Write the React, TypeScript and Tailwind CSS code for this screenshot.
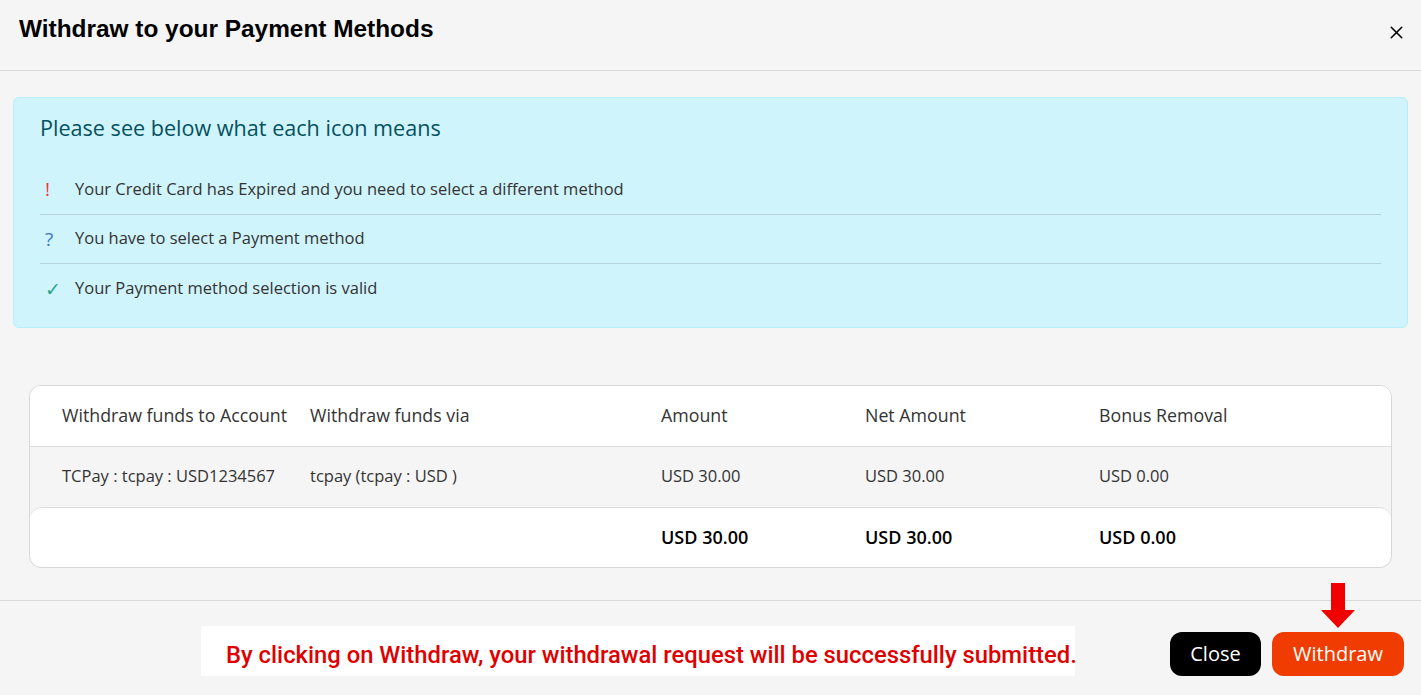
import { X } from 'lucide-react';

const LEGEND = [
  { icon: '!', color: 'text-[#f0323a]', label: 'Your Credit Card has Expired and you need to select a different method' },
  { icon: '?', color: 'text-[#3a78c4]', label: 'You have to select a Payment method' },
  { icon: '✓', color: 'text-[#2aa78a]', label: 'Your Payment method selection is valid' },
];

const COLS = ['w-[248px]', 'w-[351px]', 'w-[204px]', 'w-[234px]', 'flex-1'];

const HEAD = ['Withdraw funds to Account', 'Withdraw funds via', 'Amount', 'Net Amount', 'Bonus Removal'];
const ROW = ['TCPay : tcpay : USD1234567', 'tcpay (tcpay : USD )', 'USD 30.00', 'USD 30.00', 'USD 0.00'];
const TOTAL = ['', '', 'USD 30.00', 'USD 30.00', 'USD 0.00'];

const Row = ({ cells, className }: { cells: string[]; className: string }) => (
  <div className={`flex items-center px-8 ${className}`}>
    {cells.map((c, i) => (
      <div key={i} className={`${COLS[i]} shrink-0 whitespace-nowrap`}>{c}</div>
    ))}
  </div>
);

const App = () => {
  return (
    <div className="w-[1421px] h-[695px] bg-[#f5f5f5] flex flex-col font-['Open_Sans',sans-serif] text-[#222] overflow-hidden">
      {/* header */}
      <header className="h-[71px] flex items-center justify-between pl-[19px] pr-[14px] border-b border-[#d9d9d9] shrink-0">
        <h1 className="font-['Liberation_Sans',Arial,sans-serif] font-bold text-[24.4px] text-black -mt-[12px]">
          Withdraw to your Payment Methods
        </h1>
        <button className="text-black -mt-[6px]">
          <X size={21} strokeWidth={1.8} />
        </button>
      </header>

      <div className="px-[13px] pt-[26px]">
        {/* icon legend */}
        <div className="bg-[#cff4fc] border border-[#b6effb] rounded-md px-[26px] pt-[15px] pb-[13px]">
          <h2 className="text-[21.6px] text-[#055160] leading-[30px]">Please see below what each icon means</h2>
          <ul className="mt-[22px]">
            {LEGEND.map((item, i) => (
              <li
                key={i}
                className={`flex items-center h-[49.5px] text-[16.5px] text-[#333] ${i < 2 ? 'border-b border-[#b9d3da]' : ''}`}
              >
                <span className={`w-[35px] pl-[5px] text-[19px] ${item.color}`}>{item.icon}</span>
                <span>{item.label}</span>
              </li>
            ))}
          </ul>
        </div>

        {/* summary table */}
        <div className="mt-[57px] mx-[16px] bg-[#f5f5f5] border border-[#d8d8d8] rounded-xl overflow-hidden">
          <Row cells={HEAD} className="h-[61px] bg-white border-b border-[#dcdcdc] text-[17.8px] text-[#333]" />
          <Row cells={ROW} className="h-[60px] text-[16.5px] text-[#333]" />
          <Row cells={TOTAL} className="h-[60px] bg-white border-t border-[#dcdcdc] rounded-xl font-semibold text-[18px] text-black" />
        </div>
      </div>

      {/* footer */}
      <footer className="mt-[32px] border-t border-[#d9d9d9] flex-1 flex items-start pt-[25px] pr-[17px]">
        <div className="ml-[201px] w-[874px] h-[50px] bg-white flex items-center pl-[25px] pt-[10px] font-['Roboto',sans-serif] font-medium text-[23.8px] text-[#e00000] whitespace-nowrap">
          By clicking on Withdraw, your withdrawal request will be successfully submitted.
        </div>
        <div className="ml-auto mt-[6px] flex gap-[11px]">
          <button className="h-[44px] w-[91px] rounded-xl bg-black text-white text-[20px]">Close</button>
          <div className="relative">
            <svg
              className="absolute left-1/2 -translate-x-1/2 -top-[49px]"
              width="36"
              height="46"
              viewBox="0 0 36 46"
            >
              <path d="M11 0h14v27h10L18 45 1 27h10z" fill="#f00000" />
            </svg>
            <button className="h-[44px] w-[132px] rounded-xl bg-[#f03c00] text-white text-[20px]">Withdraw</button>
          </div>
        </div>
      </footer>
    </div>
  );
};

export default App;
